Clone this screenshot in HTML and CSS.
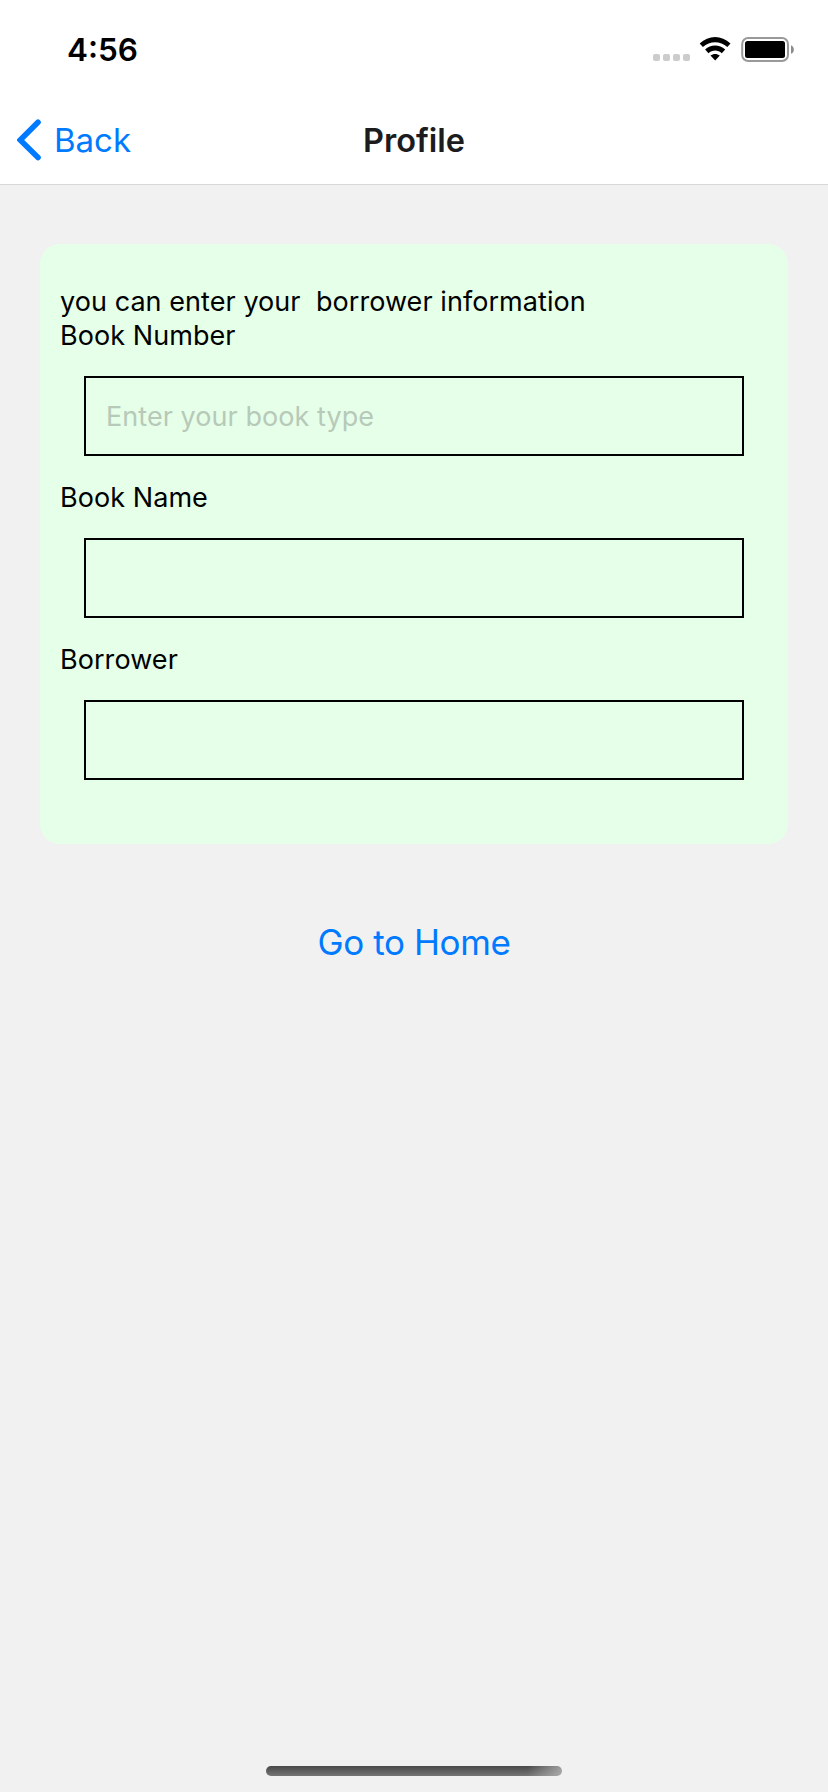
FILE: index.html
```html
<!DOCTYPE html>
<html lang="en">
<head>
<meta charset="utf-8">
<title>Profile</title>
<link rel="stylesheet" href="styles.css">
</head>
<body>
<div class="screen">
  <header class="header">
    <div class="status">
      <span class="time">4:56</span>
      <div class="indicators">
        <div class="signal"><i></i><i></i><i></i><i></i></div>
        <svg class="wifi" width="32" height="24" viewBox="0 0 32 24">
          <path d="M0.700 6.600C9.500-2.200 22.700-2.200 31.500 6.600L28.300 10C21.400 3.500 10.800 3.500 3.900 10Z"/>
          <path d="M6.100 12.600C11.700 7.200 20.500 7.200 26.200 12.600L22.800 16.200C19 12.600 13.200 12.600 9.500 16.200Z"/>
          <path d="M11.500 18.600C14.300 16.300 18 16.300 20.800 18.600L16.200 23.600Z"/>
        </svg>
        <svg class="battery" width="54" height="25" viewBox="0 0 54 25">
          <rect x="1.200" y="1" width="45.800" height="23" rx="6" fill="none" stroke="#999" stroke-width="2"/>
          <rect x="4" y="4" width="40" height="17" rx="2.500"/>
          <path d="M50 8.200C53.800 9.500 53.800 15.500 50 16.800Z" fill="#8c8c8c"/>
        </svg>
      </div>
    </div>
    <nav class="nav">
      <a class="back">
        <svg width="24" height="42" viewBox="0 0 24 42"><path d="M21 3.200L3.200 21L21 38.600" fill="none" stroke="#007aff" stroke-width="5.600" stroke-linecap="round"/></svg>
        <span>Back</span>
      </a>
      <h1 class="title">Profile</h1>
    </nav>
  </header>
  <main class="content">
    <form class="card">
      <p class="intro">you can enter your&nbsp; borrower information</p>
      <label class="label" for="number">Book Number</label>
      <input class="field" id="number" type="text" placeholder="Enter your book type">
      <label class="label" for="name">Book Name</label>
      <input class="field" id="name" type="text">
      <label class="label" for="borrower">Borrower</label>
      <input class="field" id="borrower" type="text">
    </form>
    <a class="home">Go to Home</a>
  </main>
  <div class="home-indicator"></div>
</div>
</body>
</html>
```
FILE: styles.css
```css
* { box-sizing: border-box; margin: 0; padding: 0; }
body { background: #f1f1f1; font-family: Inter, "Liberation Sans", sans-serif; color: #000; }
.screen { width: 828px; height: 1792px; display: flex; flex-direction: column; overflow: hidden; }
.header { height: 185px; background: #fff; border-bottom: 1px solid #d8d8d8; }
.status { height: 96px; padding: 30px 34px 0 67px; display: flex; justify-content: space-between; align-items: flex-start; }
.time { font-size: 31.5px; line-height: 40px; font-weight: 600; }
.indicators { display: flex; align-items: flex-start; padding-top: 7px; }
.signal { display: flex; gap: 3px; padding-top: 17px; margin-right: 9px; }
.signal i { width: 7px; height: 7px; border-radius: 2px; background: #ccc; }
.battery { margin-left: 10px; margin-right: -1px; }
.nav { height: 88px; display: grid; grid-template-columns: 1fr auto 1fr; align-items: center; padding: 0 17px; }
.back { display: flex; align-items: center; gap: 13px; color: #007aff; font-size: 33px; line-height: 40px; }
.title { padding-top: 2px; font-size: 32.5px; line-height: 40px; font-weight: 600; color: #1c1c1e; }
.content { flex: 1; display: flex; flex-direction: column; align-items: center; padding-top: 59px; }
.card { width: 748px; height: 600px; border-radius: 20px; background: #e6ffe8; padding: 40px 20px; display: flex; flex-direction: column; }
.intro, .label { height: 34px; padding-top: 1px; font-size: 27px; line-height: 34px; letter-spacing: 0.06px; }
.field { height: 80px; margin: 24px; padding: 0 20px; border: 2px solid #000; border-radius: 0; background: transparent; font: 27px Inter, "Liberation Sans", sans-serif; letter-spacing: 0.06px; outline: none; }
.field::placeholder { color: #b7c9b9; opacity: 1; }
.home { margin-top: 78px; font-size: 35px; line-height: 40px; letter-spacing: -0.4px; color: #007aff; }
.home-indicator { width: 296px; height: 10px; margin: 0 auto 16px; border-radius: 5px; background: linear-gradient(100deg, transparent 88%, rgba(190,190,190,.75) 100%), linear-gradient(#484848, #757575); }
```
